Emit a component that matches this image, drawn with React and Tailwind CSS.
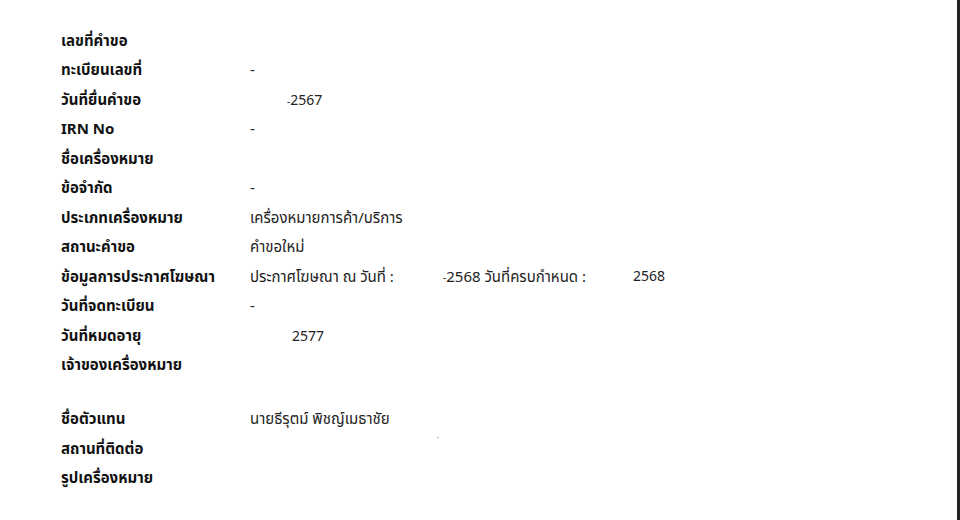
import React from "react";

const rows = [
  ["เลขที่คำขอ", ""],
  ["ทะเบียนเลขที่", "-"],
  ["วันที่ยื่นคำขอ", "date2567"],
  ["IRN No", "-"],
  ["ชื่อเครื่องหมาย", ""],
  ["ข้อจำกัด", "-"],
  ["ประเภทเครื่องหมาย", "เครื่องหมายการค้า/บริการ"],
  ["สถานะคำขอ", "คำขอใหม่"],
  ["ข้อมูลการประกาศโฆษณา", "announce"],
  ["วันที่จดทะเบียน", "-"],
  ["วันที่หมดอายุ", "exp"],
  ["เจ้าของเครื่องหมาย", ""],
];

const rows2 = [
  ["ชื่อตัวแทน", "นายธีรุตม์ พิชญ์เมธาชัย"],
  ["สถานที่ติดต่อ", ""],
  ["รูปเครื่องหมาย", ""],
];

function Value({ v }) {
  if (v === "date2567")
    return (
      <span className="pl-[37px] text-[14px]">
        <span className="text-[10px] align-middle">-</span>2567
      </span>
    );
  if (v === "exp") return <span className="pl-[42px] text-[14px]">2577</span>;
  if (v === "announce")
    return (
      <span className="flex">
        <span className="w-[193px]">ประกาศโฆษณา ณ วันที่ :</span>
        <span className="w-[190px]">
          <span className="text-[10px] align-middle">-</span>2568 วันที่ครบกำหนด :
        </span>
        <span className="text-[14px]">2568</span>
      </span>
    );
  return <span>{v}</span>;
}

function Row({ label, value }) {
  return (
    <div className="flex h-[29.5px] items-center">
      <div className="w-[189px] shrink-0 font-bold text-[15px] text-[#111]">{label}</div>
      <div className="text-[15px] text-[#222]">
        <Value v={value} />
      </div>
    </div>
  );
}

export default function App() {
  return (
    <div
      className="w-[960px] h-[520px] bg-white border-r-[3px] border-[#222] overflow-hidden relative"
      style={{ fontFamily: '"Noto Sans", "Noto Sans Thai", Tahoma, sans-serif' }}
    >
      <div className="pl-[61px] pt-[25px]">
        {rows.map(([l, v], i) => (
          <Row key={i} label={l} value={v} />
        ))}
        <div className="h-[24.5px]" />
        {rows2.map(([l, v], i) => (
          <Row key={i} label={l} value={v} />
        ))}
      </div>
      <div className="absolute left-[437px] top-[437px] w-[2px] h-[1px] bg-[#bbb]" />
    </div>
  );
}
